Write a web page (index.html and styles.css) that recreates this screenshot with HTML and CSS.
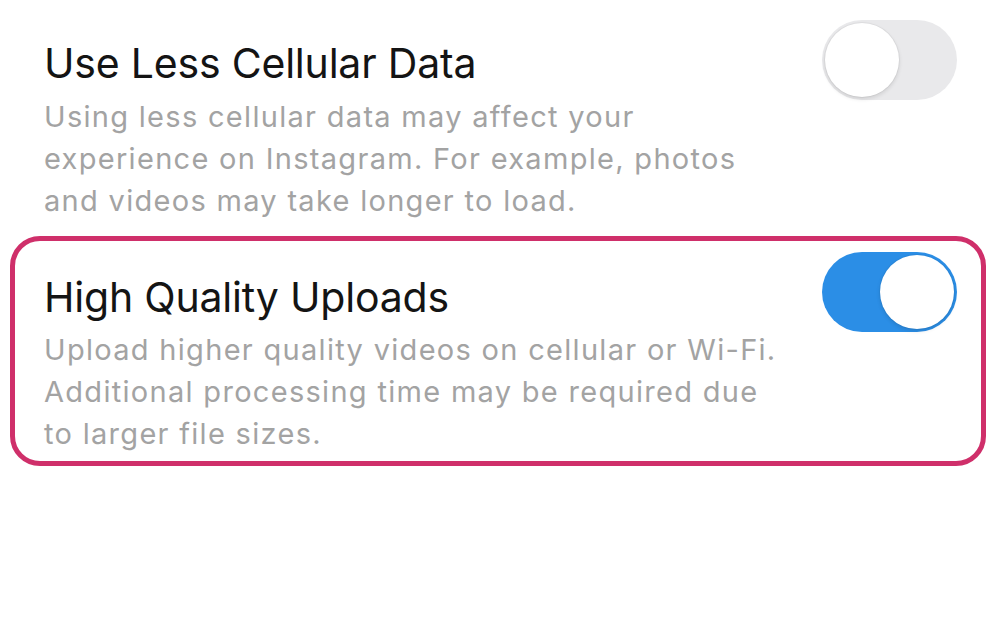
FILE: index.html
```html
<!DOCTYPE html>
<html lang="en">
<head>
<meta charset="utf-8">
<title>Data settings</title>
<link rel="stylesheet" href="styles.css">
</head>
<body>
<main class="page">
  <section class="setting setting-plain">
    <div class="setting-text">
      <h2 class="setting-title">Use Less Cellular Data</h2>
      <p class="setting-desc">Using less cellular data may affect your<br>experience on Instagram. For example, photos<br>and videos may take longer to load.</p>
    </div>
    <div class="toggle toggle-off" role="switch" aria-checked="false"><span class="knob"></span></div>
  </section>
  <section class="setting setting-highlight">
    <div class="setting-text">
      <h2 class="setting-title">High Quality Uploads</h2>
      <p class="setting-desc">Upload higher quality videos on cellular or Wi-Fi.<br>Additional processing time may be required due<br>to larger file sizes.</p>
    </div>
    <div class="toggle toggle-on" role="switch" aria-checked="true"><span class="knob"></span></div>
  </section>
</main>
</body>
</html>
```
FILE: styles.css
```css
html, body {
  margin: 0;
  padding: 0;
  background: #ffffff;
}
body {
  width: 1000px;
  height: 628px;
  overflow: hidden;
  font-family: Inter, "Open Sans", "Liberation Sans", sans-serif;
}
.page {
  display: flex;
  flex-direction: column;
  gap: 14px;
}
.setting {
  display: flex;
  justify-content: space-between;
  align-items: flex-start;
}
.setting-plain {
  padding: 20px 43px 0 44px;
}
.setting-highlight {
  margin-left: 10px;
  width: 976px;
  box-sizing: border-box;
  border: 5px solid #cf2f6a;
  border-radius: 30px;
  padding: 11px 24px 6px 29px;
}
.setting-text {
  margin-top: 17px;
}
.setting-highlight .setting-text {
  margin-top: 19px;
}
.setting-title {
  margin: 0;
  font-size: 41px;
  line-height: 52px;
  font-weight: 400;
  letter-spacing: -0.2px;
  color: #141414;
}
.setting-desc {
  margin: 7px 0 0;
  font-size: 29px;
  line-height: 42px;
  letter-spacing: 1.3px;
  color: #a3a3a3;
  white-space: nowrap;
}
.setting-highlight .setting-desc {
  margin-top: 6px;
}
.toggle {
  flex: none;
  width: 135px;
  height: 80px;
  border-radius: 40px;
  box-sizing: border-box;
  padding: 3px;
  display: flex;
}
.toggle-off {
  background: #e9e9eb;
  justify-content: flex-start;
}
.toggle-on {
  background: #2b8ee6;
  justify-content: flex-end;
}
.knob {
  width: 74px;
  height: 74px;
  border-radius: 50%;
  background: #ffffff;
  box-shadow: 0 2px 4px rgba(0,0,0,0.12), 0 0 0 1px rgba(0,0,0,0.04);
}
```
